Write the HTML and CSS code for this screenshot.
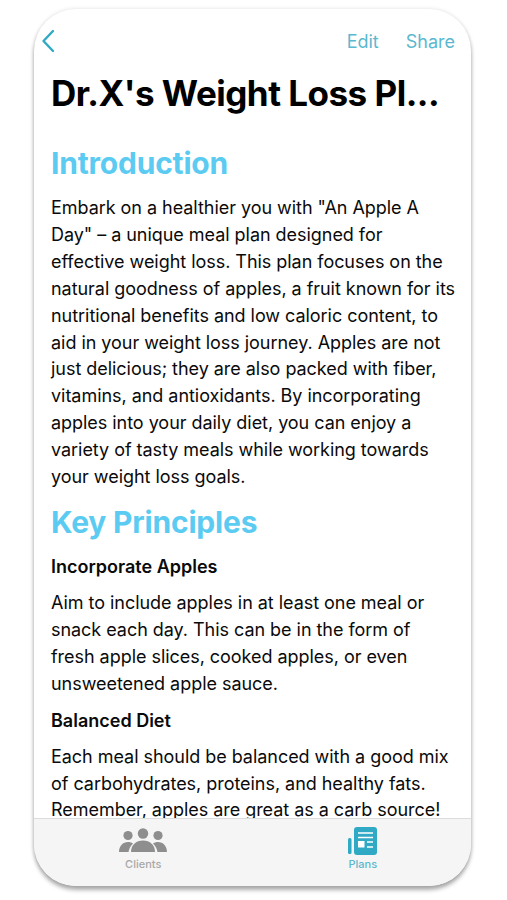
FILE: index.html
```html
<!DOCTYPE html>
<html lang="en">
<head>
<meta charset="utf-8">
<title>Dr.X's Weight Loss Plan</title>
<link rel="stylesheet" href="styles.css">
</head>
<body>
<div class="phone">
  <header class="nav">
    <svg class="back" width="14" height="24" viewBox="0 0 14 24"><path d="M12 2 L2.500 12 L12 22" fill="none" stroke="#2fa9c4" stroke-width="2.400" stroke-linecap="round" stroke-linejoin="round"/></svg>
    <div class="actions"><span>Edit</span><span>Share</span></div>
  </header>
  <main class="content">
    <h1>Dr.X's Weight Loss Pl...</h1>
    <h2 class="first">Introduction</h2>
    <p>Embark on a healthier you with "An Apple A Day" – a unique meal plan designed for effective weight loss. This plan focuses on the natural goodness of apples, a fruit known for its nutritional benefits and low caloric content, to aid in your weight loss journey. Apples are not just delicious; they are also packed with fiber, vitamins, and antioxidants. By incorporating apples into your daily diet, you can enjoy a variety of tasty meals while working towards your weight loss goals.</p>
    <h2>Key Principles</h2>
    <h3>Incorporate Apples</h3>
    <p>Aim to include apples in at least one meal or snack each day. This can be in the form of fresh apple slices, cooked apples, or even unsweetened apple sauce.</p>
    <h3>Balanced Diet</h3>
    <p>Each meal should be balanced with a good mix of carbohydrates, proteins, and healthy fats. Remember, apples are great as a carb source!</p>
  </main>
  <nav class="tabs">
    <div class="tab">
      <svg width="50" height="26" viewBox="0 0 50 26" fill="#8e8e8e">
        <circle cx="10" cy="7.500" r="4.600"/><circle cx="40" cy="7.500" r="4.600"/><circle cx="25" cy="5.500" r="5.200"/>
        <path d="M1 24c0-6 4-10 9-10 2 0 3.500.5 5 1.500-2.500 2.500-4 5.500-4.500 8.500z"/>
        <path d="M49 24c0-6-4-10-9-10-2 0-3.500.5-5 1.500 2.500 2.500 4 5.500 4.500 8.500z"/>
        <path d="M13 24c0-7 5-11.500 12-11.500S37 17 37 24z"/>
      </svg>
      <span>Clients</span>
    </div>
    <div class="tab active">
      <svg width="30" height="28" viewBox="0 0 30 28">
        <rect x="0" y="11" width="3.500" height="16" rx="1.500" fill="#2fa9c4"/>
        <rect x="6" y="0" width="23" height="28" rx="3" fill="#2fa9c4"/>
        <path d="M10 6h15M10 10.500h15M19 15h6M19 20h6" stroke="#fff" stroke-width="1.600" fill="none"/>
        <rect x="10" y="14" width="6.500" height="6.500" fill="#fff"/>
      </svg>
      <span>Plans</span>
    </div>
  </nav>
</div>
</body>
</html>
```
FILE: styles.css
```css
* { box-sizing: border-box; }
html, body { margin: 0; height: 100%; background: #fff; }
body { padding: 9px 36px 0 34px; font-family: Inter, "Liberation Sans", sans-serif; overflow: hidden; }
.phone {
  width: 437px; height: 877px; border-radius: 42px; background: #fff;
  overflow: hidden; display: flex; flex-direction: column;
  box-shadow: 0 4px 4px rgba(0,0,0,.32), 0 0 4px rgba(0,0,0,.12);
}
.nav { flex: none; height: 50px; padding: 19px 16px 0 7px; display: flex; justify-content: space-between; align-items: flex-start; }
.back { display: block; margin-top: 1px; }
.actions { display: flex; gap: 27px; color: #5cb8cf; font-size: 18px; line-height: 28px; margin-top: 0; }
.content { flex: 1; min-height: 0; overflow: hidden; padding: 0 15px 0 17px; color: #0a0a0a; }
h1 { margin: 9px 0 0; font-size: 35px; line-height: 50px; font-weight: 700; letter-spacing: -.5px; white-space: nowrap; color: #000; }
h2 { margin: 8px 0 0; font-size: 30px; line-height: 46px; font-weight: 700; color: #5ccbf2; letter-spacing: -.2px; }
h2.first { margin-top: 22px; }
h3 { margin: 0; font-size: 18px; line-height: 27px; font-weight: 600; }
p { margin: 0; font-size: 18px; line-height: 26.900px; letter-spacing: -.04px; }
h2 + h3 { margin-top: 8px; }
h3 + p { margin-top: 10px; }
p + h3 { margin-top: 9px; }
h2 + p { margin-top: 9px; }
.tabs { flex: none; height: 68px; background: #f5f5f5; border-top: 1px solid #dcdcdc; display: flex; }
.tab { flex: 1; display: flex; flex-direction: column; align-items: center; padding-top: 8px; color: #a8a8a8; font-size: 11px; font-weight: 500; }
.tab svg { display: block; height: 28px; }
.tab span { margin-top: 2px; line-height: 14px; }
.tab.active { color: #5cb8cf; transform: translateX(1px); }
```
